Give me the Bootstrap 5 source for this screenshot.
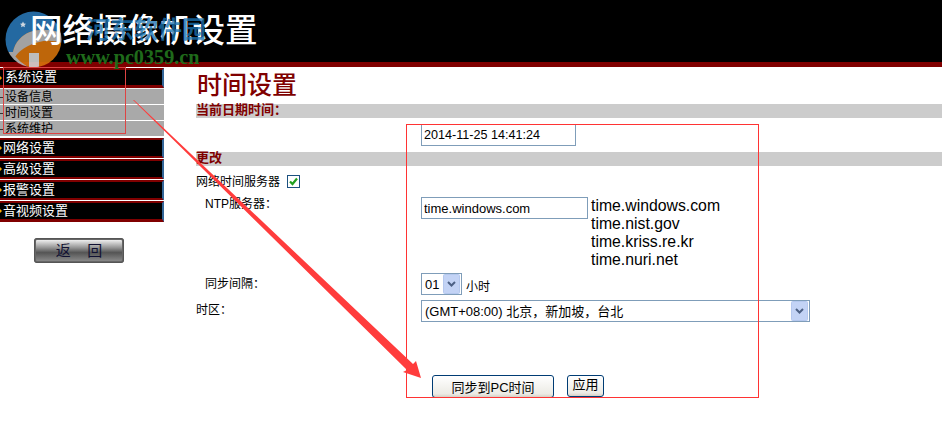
<!DOCTYPE html>
<html lang="zh-CN">
<head>
<meta charset="utf-8">
<title>网络摄像机设置</title>
<link href="https://cdn.jsdelivr.net/npm/bootstrap@5.3.0/dist/css/bootstrap.min.css" rel="stylesheet">
<style>
html,body{height:430px;overflow:hidden;background:#fff}
body{font-family:"Liberation Sans","Noto Sans CJK SC",sans-serif;font-size:12px;line-height:14px;color:#000;position:relative}
.cam-head{height:68px;background:#000;border-bottom:1px solid #fff;box-shadow:inset 0 -5px 0 #800000;padding-left:30px}
.cam-title{color:#fff;font-size:32.500px;line-height:62px;font-weight:500;margin:0;position:relative;z-index:2}
.side-col{width:163.500px;flex:none}
.side-top{height:21px;background:#000;color:#fff;font-size:13px;line-height:15px;padding-left:3px;border-top:2px solid #800000;border-bottom:3px solid #800000;border-right:2px solid #336699;box-shadow:0 -1px 0 #fff;position:relative}
.side-top::before{content:"";position:absolute;left:0;top:6px;border-left:2px solid #fa0;border-top:2px solid transparent;border-bottom:2px solid transparent}
.side-first{padding-left:5px;height:20px;margin-top:0;box-shadow:none;line-height:14px}
.side-sub{height:16px;background:#a9a9a9;color:#000;padding-left:5px;font-size:12px;line-height:16px;border-bottom:1px solid #fff;position:relative}
.side-sub::before{content:"";position:absolute;left:0;top:8px;width:3px;height:1px;background:#333}
.side-subs{border-top:1px solid #eee;padding-bottom:1px}
.back-btn{display:block;width:90px;height:25px;margin:16px 0 0 34px;padding:0;border:2px solid #666;outline:1px solid #555;outline-offset:-1px;border-radius:3px;background:linear-gradient(#eee,#999 35%,#555 60%,#888);color:#113;font-size:15px;line-height:20px}
.main-col{padding-left:32.500px;min-width:0}
.page-title{height:36px;margin:0;color:#800000;font-size:25px;line-height:34px;font-weight:500;padding-left:1px}
.sec-bar{height:14px;background:#ccc;color:#800000;font-weight:700;line-height:11px;margin:0;font-size:13px}
.lbl-col{width:225px;flex:none}
.lbl-in{padding-left:9px}
.lbl-tz{padding-top:3px}
.xp-input{display:block;height:22px;border:1px solid #7f9db9;padding:1px 2px 0;font:13px "Liberation Sans","Noto Sans CJK SC",sans-serif;color:#000;background:#fff;border-radius:0;outline:none}
.date-in{width:155px;font-size:12.600px;padding-top:0}
.ntp-in{width:167px}
.xp-sel{appearance:none;-webkit-appearance:none;background-image:url("data:image/svg+xml,%3Csvg xmlns='http://www.w3.org/2000/svg' width='17' height='20'%3E%3Crect x='.5' y='.5' width='16' height='19' rx='1' fill='%23c3d3f5' stroke='%23b5c8ee'/%3E%3Cpath d='M5 8l3.500 3.500L12 8' fill='none' stroke='%234d6185' stroke-width='2'/%3E%3C/svg%3E");background-repeat:no-repeat;background-position:right 1px center;padding:0 18px 0 3px}
.sel-hr{width:41px}
.sel-tz{width:389px}
.time-list{font-size:15.800px;line-height:18px;color:#000;padding-left:3px;margin:0;list-style:none}
.ntp-row{height:71px}
.xp-check{width:13px;height:13px;border:1px solid #1c5180;background:#fff;margin-left:7px;display:inline-flex;align-items:center;justify-content:center;flex:none}
.btn-xp{height:23px;border:1px solid #003c74;border-radius:3px;background:linear-gradient(#fff,#ecebe5 85%,#d6d0c5);color:#000;font:13px "Liberation Sans","Noto Sans CJK SC",sans-serif;padding:0}
.btn-sync{width:122px;margin-left:236px}
.btn-apply{width:37px;height:22px;margin-left:13px;line-height:15px;padding-bottom:4px}
.over-art{position:absolute;left:0;top:0;width:942px;height:430px;pointer-events:none}
.wm-cn{position:absolute;left:86px;top:16px;z-index:3;font-size:24px;line-height:28px;color:#1a72b0;opacity:.78;white-space:nowrap;font-weight:700}
.wm-url{position:absolute;left:66px;top:47px;z-index:3;font:700 20.200px/20px "Liberation Serif",serif;color:#1f6a1a;white-space:nowrap}
.rw-date{margin-top:6px}
.rw-bar2{margin-top:6px}
.rw-net{margin-top:9px;height:13px}
.rw-ntp{margin-top:9px}
.rw-int{margin-top:5px}
.rw-tz{margin-top:5px}
.rw-btn{margin-top:53px}
.hr-unit{font-size:12px;line-height:14px;margin-bottom:1px}
</style>
</head>
<body>
<header class="cam-head"><h1 class="cam-title">网络摄像机设置</h1></header>
<div class="d-flex">
  <nav class="side-col">
    <div class="side-top side-first">系统设置</div>
    <div class="side-subs">
      <div class="side-sub">设备信息</div>
      <div class="side-sub">时间设置</div>
      <div class="side-sub">系统维护</div>
    </div>
    <div class="side-top">网络设置</div>
    <div class="side-top">高级设置</div>
    <div class="side-top">报警设置</div>
    <div class="side-top">音视频设置</div>
    <button type="button" class="back-btn">返&nbsp;&nbsp;&nbsp;&nbsp;回</button>
  </nav>
  <main class="main-col flex-grow-1">
    <h2 class="page-title">时间设置</h2>
    <div class="sec-bar">当前日期时间：</div>
    <div class="d-flex rw-date">
      <div class="lbl-col"></div>
      <input class="xp-input date-in" value="2014-11-25 14:41:24">
    </div>
    <div class="sec-bar rw-bar2">更改</div>
    <div class="d-flex align-items-center rw-net">
      <span>网络时间服务器</span>
      <span class="xp-check"><svg width="11" height="11" viewBox="0 0 11 11"><path d="M2 5.500l2.500 2.500L9 2.500" fill="none" stroke="#22a020" stroke-width="2.200"/></svg></span>
    </div>
    <div class="d-flex ntp-row rw-ntp">
      <div class="lbl-col lbl-in">NTP服务器：</div>
      <input class="xp-input ntp-in" value="time.windows.com">
      <ul class="time-list">
        <li>time.windows.com</li>
        <li>time.nist.gov</li>
        <li>time.kriss.re.kr</li>
        <li>time.nuri.net</li>
      </ul>
    </div>
    <div class="d-flex rw-int">
      <div class="lbl-col lbl-in pt-1">同步间隔：</div>
      <select class="xp-input xp-sel sel-hr"><option>01</option></select>
      <span class="ms-1 align-self-end hr-unit">小时</span>
    </div>
    <div class="d-flex rw-tz">
      <div class="lbl-col lbl-tz">时区：</div>
      <select class="xp-input xp-sel sel-tz"><option>(GMT+08:00) 北京，新加坡，台北</option></select>
    </div>
    <div class="d-flex rw-btn">
      <button type="button" class="btn-xp btn-sync">同步到PC时间</button>
      <button type="button" class="btn-xp btn-apply">应用</button>
    </div>
  </main>
</div>
<svg class="over-art" viewBox="0 0 942 430" aria-hidden="true">
  <defs>
    <clipPath id="disc"><circle cx="33.500" cy="39.500" r="28"/></clipPath>
  </defs>
  <g clip-path="url(#disc)" opacity=".88">
    <rect x="5" y="11" width="57" height="58" fill="#d9750c"/>
    <path d="M5 11h57v22C52 30 40 29 30 32 22 35 15 42 13 52H5Z" fill="#2a78b8"/>
    <path d="M13 52C15 42 22 35 30 32 42 28 52 30 62 33v10C50 39 38 41 28 46 22 49 17 53 13 60Z" fill="#b9b9b9"/>
    <path d="M5 52h8c2 6 8 10 16 16H5Z" fill="#b9b9b9"/>
    <path d="M29 53h10v16H29z" fill="#d8d8d8"/>
  </g>
  <path d="M23 21.500l1 2 2 .3-1.500 1.400.4 2-1.900-1-1.900 1 .4-2-1.500-1.400 2-.3Z" fill="#cfd8e0"/>
  <rect x="406.500" y="124.500" width="352" height="273" fill="none" stroke="#f33"/>
  <rect x="3.500" y="67.500" width="122" height="66" fill="none" stroke="#d44"/>
  <polygon points="133,100 134,100 413,364 416,361 421,378 403,372 407,370" fill="#ff3c3c"/>
</svg>
<div class="wm-cn">河东软件园</div>
<div class="wm-url">www.pc0359.cn</div>
<script src="https://cdn.jsdelivr.net/npm/bootstrap@5.3.0/dist/js/bootstrap.bundle.min.js"></script>
</body>
</html>
